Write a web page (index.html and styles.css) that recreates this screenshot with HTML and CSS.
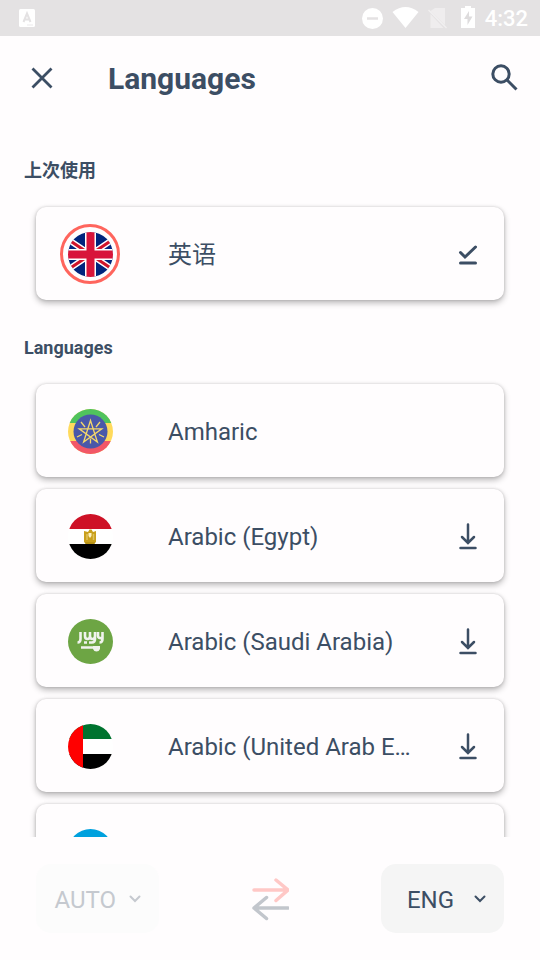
FILE: index.html
```html
<!DOCTYPE html>
<html lang="en">
<head>
<meta charset="utf-8">
<meta name="viewport" content="width=device-width, initial-scale=1">
<title>Languages</title>
<link rel="stylesheet" href="styles.css">
</head>
<body>
<svg class="symbols" aria-hidden="true">
  <symbol id="download" viewBox="0 0 30 30">
    <path d="M15 3.500V21M9 16l6 6 6-6M7.500 27h15" fill="none" stroke="currentColor" stroke-width="2.500" stroke-linecap="round"/>
  </symbol>
  <symbol id="chevron" viewBox="0 0 12 12">
    <path d="M1.500 2.500L6 7l4.500-4.500" fill="none" stroke="currentColor" stroke-width="2" stroke-linecap="round"/>
  </symbol>
</svg>

<div class="status">
  <svg width="16" height="18" viewBox="0 0 16 18" aria-hidden="true">
    <rect width="16" height="18" rx="1.500" fill="#fff"/>
    <path d="M4.500 13L8 4.500l3.500 8.500M6 10.500h4" fill="none" stroke="#e4e2e3" stroke-width="2"/>
    <path d="M8.500 16h6" stroke="#e4e2e3" stroke-width="1.500" stroke-dasharray="1 1"/>
  </svg>
  <div class="status-end">
    <svg width="120" height="24" viewBox="0 0 120 24" aria-hidden="true">
      <circle cx="12.500" cy="12.500" r="10.500" fill="#fff"/>
      <path d="M7 12.500h11" stroke="#e4e2e3" stroke-width="2.500"/>
      <path d="M32.500 6Q45.500-4 58.500 6L45.500 22z" fill="#fff"/>
      <path d="M75 2h10v17L70.500 5zM70.500 8v14h13z" fill="#efedee"/>
      <path d="M68.500 4l18 18" stroke="#f1eff0" stroke-width="1.500"/>
      <path d="M101 2h4V0h6v2h4v20h-14z" fill="#fff"/>
      <path d="M109 5l-5 8h3.500v6l5-8.500H109z" fill="#dedcdd"/>
    </svg>
    <span class="clock">4:32</span>
  </div>
</div>

<header class="topbar">
  <button class="icon-button" type="button" aria-label="Close">
    <svg width="24" height="24" viewBox="0 0 24 24"><path d="M2.500 2.500l19 19M21.500 2.500l-19 19" stroke="currentColor" stroke-width="2.800"/></svg>
  </button>
  <h1>Languages</h1>
  <button class="icon-button" type="button" aria-label="Search">
    <svg width="28" height="28" viewBox="0 0 28 28" fill="none" stroke="currentColor"><circle cx="11" cy="10" r="8.200" stroke-width="3"/><path d="M17 16l9.500 9.500" stroke-width="3"/></svg>
  </button>
</header>

<main class="content">
  <h2 lang="zh">上次使用</h2>
  <ul class="cards">
    <li><button class="card" type="button">
      <span class="flag selected">
        <svg viewBox="0 0 45 45" aria-hidden="true">
          <path fill="#00247d" d="M0 0h45v45H0z"/>
          <path d="M-8 2l61 41M53 2L-8 43" stroke="#fff" stroke-width="6"/>
          <path d="M-8 2l61 41M53 2L-8 43" stroke="#cf142b" stroke-width="3"/>
          <path d="M22.500 0v45M0 22.500h45" stroke="#fff" stroke-width="11"/>
          <path d="M22.500 0v45M0 22.500h45" stroke="#d8143a" stroke-width="8"/>
        </svg>
      </span>
      <span class="name" lang="zh">英语</span>
      <svg class="action" viewBox="0 0 30 30" aria-hidden="true"><path d="M7.500 13.500l4.500 4.500L22.500 8M7.500 24h15" fill="none" stroke="currentColor" stroke-width="3" stroke-linecap="round"/></svg>
    </button></li>
  </ul>

  <h2>Languages</h2>
  <ul class="cards">
    <li><button class="card" type="button">
      <span class="flag">
        <svg viewBox="0 0 45 45" aria-hidden="true">
          <path fill="#ffda5c" d="M0 0h45v45H0z"/><path fill="#50c35d" d="M0 0h45v14H0z"/><path fill="#f25767" d="M0 32h45v13H0z"/>
          <circle cx="22.500" cy="22.500" r="17" fill="#4a58a9"/>
          <g fill="none" stroke="#f5d76a" stroke-width="1.300">
            <path d="M22.500 11.500L29.400 33 11.200 19.800h22.600L15.600 33z"/>
            <path d="M28 18l4-5M17 18l-4-5M31 25.500l5 2.500M14 25.500L9 28M22.500 29.500v5"/>
          </g>
        </svg>
      </span>
      <span class="name">Amharic</span>
    </button></li>
    <li><button class="card" type="button">
      <span class="flag">
        <svg viewBox="0 0 45 45" aria-hidden="true">
          <path fill="#fff" d="M0 0h45v45H0z"/><path fill="#ce1126" d="M0 0h45v15H0z"/><path d="M0 30h45v15H0z"/>
          <path d="M16 17l4 1 1.500-2.500h2L25 18l3-1v11l-2 2H18l-2-2z" fill="#c9a01c"/>
          <path d="M19 20v6M25.500 20v6" stroke="#dfc25f" stroke-width="1.500"/>
          <path d="M20.500 19h3v3l-1.500 2-1.500-2z" fill="#fff3c0"/>
          <path d="M17 29h10" stroke="#a88710"/>
        </svg>
      </span>
      <span class="name">Arabic (Egypt)</span>
      <svg class="action" aria-hidden="true"><use href="#download"/></svg>
    </button></li>
    <li><button class="card" type="button">
      <span class="flag">
        <svg viewBox="0 0 45 45" aria-hidden="true">
          <path fill="#6da544" d="M0 0h45v45H0z"/>
          <g fill="none" stroke="#f0f3ed" stroke-width="2.600">
            <path d="M12.500 13v7q0 3.500-3 3.500M17 13v4q0 3 2.500 3t2.500-3v-4M22 17q0 3 2.500 3t2.500-3v-4M27 17v3q0 3.500-3 3.500h-3M16 23.500h3M30 13v4q0 2.500 4 2M34.500 13v7q0 3.500-3 3.500"/>
            <path d="M13 28.500h14"/>
          </g>
          <path d="M25 27h7v3q-1 2.500-3.500 2.500T25 30z" fill="#f0f3ed"/>
        </svg>
      </span>
      <span class="name">Arabic (Saudi Arabia)</span>
      <svg class="action" aria-hidden="true"><use href="#download"/></svg>
    </button></li>
    <li><button class="card" type="button">
      <span class="flag">
        <svg viewBox="0 0 45 45" aria-hidden="true">
          <path fill="#fff" d="M0 0h45v45H0z"/><path fill="#00732f" d="M0 0h45v15H0z"/><path d="M0 30h45v15H0z"/><path fill="#f00" d="M0 0h15v45H0z"/>
        </svg>
      </span>
      <span class="name">Arabic (United Arab Emirates)</span>
      <svg class="action" aria-hidden="true"><use href="#download"/></svg>
    </button></li>
    <li><button class="card" type="button" aria-label="Next language">
      <span class="flag">
        <svg viewBox="0 0 45 45" aria-hidden="true"><path fill="#00a1de" d="M0 0h45v45H0z"/></svg>
      </span>
    </button></li>
  </ul>
</main>

<footer class="bottom">
  <button class="chip" type="button" disabled>AUTO <svg aria-hidden="true"><use href="#chevron"/></svg></button>
  <button class="swap" type="button" disabled aria-label="Swap languages">
    <svg width="38" height="44" viewBox="0 0 38 44" fill="none" stroke-width="3.500" stroke-linecap="round" stroke-linejoin="round">
      <path d="M3 13h34M25 3l12 10-12 10.500" stroke="#ffc8c6"/>
      <path d="M37 31H3M15.500 20.500L3 31l12.500 10.500" stroke="#c2c6cc"/>
    </svg>
  </button>
  <button class="chip" type="button">ENG <svg aria-hidden="true"><use href="#chevron"/></svg></button>
</footer>
</body>
</html>
```

FILE: styles.css
```css
* {
  box-sizing: border-box;
}

body {
  display: flex;
  flex-direction: column;
  height: 100vh;
  margin: 0;
  background: #fffdfe;
  color: #3c4e64;
  font-family: Roboto, "Noto Sans CJK SC", sans-serif;
}

button {
  margin: 0;
  padding: 0;
  border: 0;
  background: none;
  color: inherit;
  font: inherit;
}

svg {
  display: block;
}

.symbols {
  position: absolute;
  width: 0;
  height: 0;
}

.status {
  display: flex;
  flex: none;
  align-items: center;
  justify-content: space-between;
  height: 36px;
  padding: 0 12px 0 19px;
  background: #e4e2e3;
  color: #fff;
}

.status-end {
  display: flex;
  align-items: center;
  gap: 5px;
}

.clock {
  padding-top: 2px;
  font-size: 22px;
  font-weight: 500;
  line-height: 34px;
}

.topbar {
  display: flex;
  flex: none;
  align-items: center;
  height: 84px;
  padding: 0 12px 0 18px;
}

.icon-button {
  display: grid;
  place-items: center;
  width: 48px;
  height: 48px;
}

h1 {
  flex: 1;
  margin: 0 0 0 42px;
  padding-top: 2px;
  font-size: 30px;
  line-height: 36px;
}

.content {
  flex: 1;
  min-height: 0;
  overflow: hidden;
  padding: 37px 24px 0;
}

h2 {
  margin: 0;
  font-size: 18px;
  line-height: 27px;
}

.cards {
  display: grid;
  grid-template-columns: minmax(0, 1fr);
  gap: 12px;
  margin: 0;
  padding: 23px 12px 34px;
  list-style: none;
}

.card {
  display: flex;
  align-items: center;
  width: 100%;
  height: 93px;
  padding: 0 21px 0 24px;
  border-radius: 10px;
  background: #fffdfe;
  box-shadow: 0 3px 6px rgba(0, 0, 0, 0.28), 0 0 3px rgba(0, 0, 0, 0.16);
  text-align: left;
}

.flag {
  flex: none;
  width: 60px;
  height: 60px;
  padding: 8px 7px 7px 8px;
  border-radius: 50%;
}

.flag svg {
  width: 45px;
  height: 45px;
  border-radius: 50%;
}

.selected {
  padding: 5px 4px 4px 5px;
  border: 3px solid #ff655d;
}

.name {
  flex: 1;
  min-width: 0;
  margin: 0 36px 0 48px;
  padding-top: 2px;
  overflow: hidden;
  font-size: 24px;
  line-height: 36px;
  text-overflow: ellipsis;
  white-space: nowrap;
}

.action {
  flex: none;
  width: 30px;
  height: 30px;
}

.bottom {
  display: flex;
  flex: none;
  align-items: center;
  justify-content: space-between;
  padding: 27px 36px;
}

.chip {
  display: flex;
  align-items: center;
  justify-content: flex-end;
  gap: 20px;
  width: 123px;
  height: 69px;
  padding: 2px 18px 0 0;
  border-radius: 15px;
  background: #f5f5f5;
  font-size: 24px;
}

.chip svg {
  width: 12px;
  height: 12px;
}

.chip:disabled {
  gap: 13px;
  background: #fcfcfc;
  color: #c5c9cf;
}
```
